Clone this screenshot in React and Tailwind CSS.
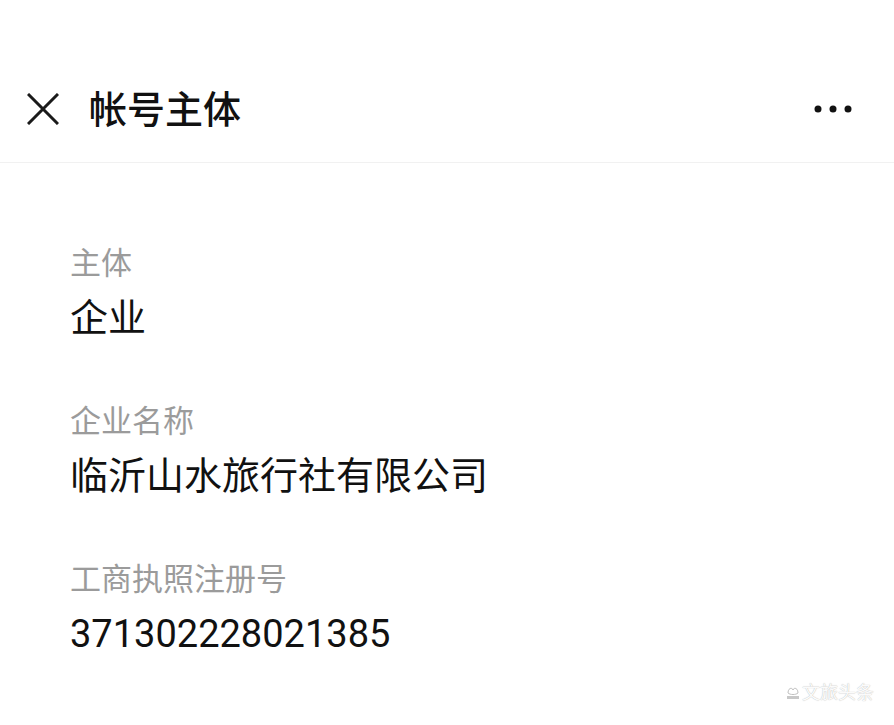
import React from "react";

const fields = [
  { label: "主体", value: "企业" },
  { label: "企业名称", value: "临沂山水旅行社有限公司" },
  { label: "工商执照注册号", value: "371302228021385" },
];

function App() {
  return (
    <div
      className="relative min-h-screen bg-white text-[#111111]"
      style={{ fontFamily: 'Roboto, "Noto Sans CJK SC", sans-serif' }}
    >
      <div className="pt-14">
        <div className="flex h-[107px] items-center border-b border-[#f1f1f1] pl-[27px] pr-[42px]">
          <svg width="32" height="32" viewBox="0 0 32 32" className="shrink-0">
            <path d="M1 1 L31 31 M31 1 L1 31" stroke="#1a1a1a" strokeWidth="3" fill="none" />
          </svg>
          <h1 className="ml-[30px] mt-[2px] text-[38px] font-medium leading-none tracking-normal">帐号主体</h1>
          <svg width="38" height="8" viewBox="0 0 38 8" className="ml-auto">
            <circle cx="4" cy="4" r="3.5" fill="#111" />
            <circle cx="19" cy="4" r="3.5" fill="#111" />
            <circle cx="34" cy="4" r="3.5" fill="#111" />
          </svg>
        </div>
      </div>

      <div className="flex flex-col gap-[60px] pl-[70px] pt-[79px]">
        {fields.map((f) => (
          <div key={f.label} className="flex flex-col gap-[10px]">
            <span className="text-[31px] leading-[44px] text-[#9b9b9b]">{f.label}</span>
            <span className="text-[38px] leading-[44px] text-[#111111]">{f.value}</span>
          </div>
        ))}
      </div>

      <div className="absolute right-[20px] top-[684px] flex items-center gap-[2px] text-[18px] leading-none text-[#fbfbfb] [text-shadow:0_0_1px_#a8a8a8]">
        <svg width="14" height="16" viewBox="0 0 14 16">
          <path d="M2 8 C2 3 6 2 7 5 C8 2 12 3 12 8 C10 10 4 10 2 8 Z" fill="none" stroke="#c0c0c0" strokeWidth="1" />
          <rect x="1" y="11" width="12" height="3" fill="#c8c8c8" />
        </svg>
        <span>文旅头条</span>
      </div>
    </div>
  );
}

export default App;
